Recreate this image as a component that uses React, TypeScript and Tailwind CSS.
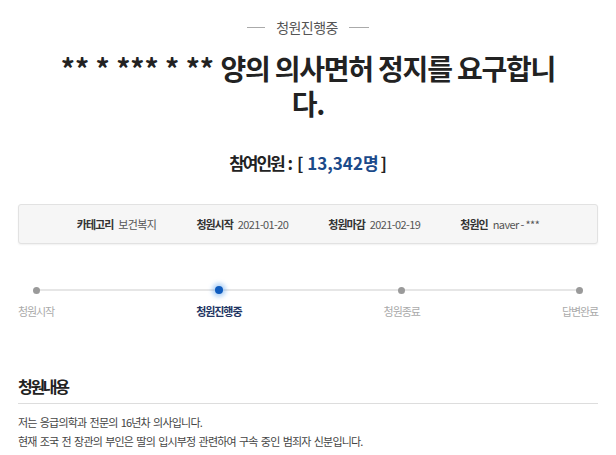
const steps = [
  { label: '청원시작', active: false },
  { label: '청원진행중', active: true },
  { label: '청원종료', active: false },
  { label: '답변완료', active: false },
];

const meta = [
  { label: '카테고리', value: '보건복지' },
  { label: '청원시작', value: '2021-01-20' },
  { label: '청원마감', value: '2021-02-19' },
  { label: '청원인', value: 'naver - ***' },
];

export default function App() {
  return (
    <div className="min-h-screen bg-white px-[18px] font-['Noto_Sans_CJK_KR',sans-serif] text-[#333]">
      {/* status */}
      <div className="flex items-center justify-center gap-[11px] pt-[17px]">
        <span className="h-px w-[18px] bg-[#aaa]" />
        <span className="text-[14px] leading-[20px] tracking-[-0.6px] text-[#555]">청원진행중</span>
        <span className="h-px w-[20px] bg-[#aaa]" />
      </div>

      <h1 className="mx-auto mt-[14px] max-w-[508px] text-center text-[28px] font-bold leading-[35px] text-[#222]">
        ** * *** * ** <span className="tracking-[-1.2px]">양의 의사면허 정지를 요구합니다.</span>
      </h1>

      <p className="mt-[30px] text-center text-[17px] font-bold leading-[24px] text-[#222]">
        <span className="tracking-[-2px]">참여인원</span> : [ <span className="text-[#1b4a8a]">13,342<span className="tracking-[-2px]">명</span></span> ]
      </p>

      {/* info box */}
      <div className="mt-[29px] flex h-[40px] items-center justify-center gap-[40px] rounded-[3px] border border-[#e2e2e2] bg-[#f6f6f6] shadow-[0_1px_2px_rgba(0,0,0,0.06)]">
        {meta.map((m) => (
          <div key={m.label} className="flex items-baseline gap-[5px] text-[11px]">
            <span className="font-bold tracking-[-1px] text-[#333]">{m.label}</span>
            <span className="tracking-[-0.6px] text-[#555]">{m.value}</span>
          </div>
        ))}
      </div>

      {/* progress */}
      <div className="relative mt-[38px]">
        <div className="absolute left-[20px] right-[19px] top-[7px] h-[2px] bg-[#e6e6e6]" />
        <div className="relative flex justify-between">
          {steps.map((s) => (
            <div key={s.label} className="flex flex-col items-center">
              <div className="flex h-4 items-center justify-center">
                {s.active ? (
                  <span className="h-[8px] w-[8px] rounded-full bg-[#0f5cbf] shadow-[0_0_4px_3px_rgba(70,150,235,0.4)]" />
                ) : (
                  <span className="h-[7px] w-[7px] rounded-full bg-[#9a9a9a]" />
                )}
              </div>
              <span
                className={
                  s.active
                    ? 'mt-[5px] text-[11px] font-bold leading-[16px] tracking-[-1.1px] text-[#1f3563]'
                    : 'mt-[5px] text-[11px] leading-[16px] tracking-[-1.1px] text-[#aaa]'
                }
              >
                {s.label}
              </span>
            </div>
          ))}
        </div>
      </div>

      {/* content */}
      <h2 className="mt-[56px] border-b border-[#ddd] pb-[6px] text-[16px] font-bold leading-[22px] tracking-[-2.3px] text-[#222]">
        청원내용
      </h2>
      <div className="mt-[9px] text-[11px] leading-[19px] tracking-[-0.8px] text-[#444] [word-spacing:1.5px]">
        <p>저는 응급의학과 전문의 16년차 의사입니다.</p>
        <p>현재 조국 전 장관의 부인은 딸의 입시부정 관련하여 구속 중인 범죄자 신분입니다.</p>
      </div>
    </div>
  );
}
